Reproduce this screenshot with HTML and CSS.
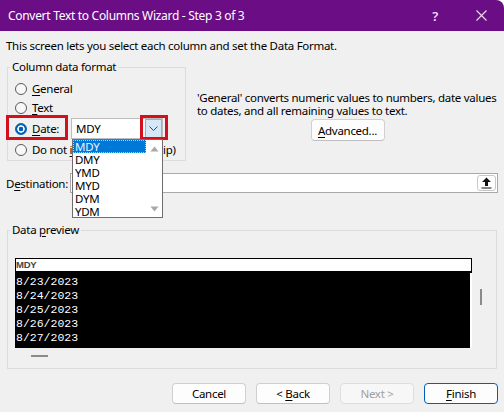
FILE: index.html
```html
<!DOCTYPE html>
<html>
<head>
<meta charset="utf-8">
<title>Convert Text to Columns Wizard - Step 3 of 3</title>
<link rel="stylesheet" href="styles.css">
</head>
<body>
<div class="dialog">
  <div class="titlebar">
    <span class="title">Convert Text to Columns Wizard - Step 3 of 3</span>
    <span class="tb-btn help">?</span>
    <span class="tb-btn close"><svg width="11" height="11" viewBox="0 0 11 11"><path d="M0.5 0.5L10.5 10.5M10.5 0.5L0.5 10.5" stroke="#f2dcf5" stroke-width="1.1" fill="none"/></svg></span>
  </div>
  <div class="content">
    <p class="intro">This screen lets you select each column and set the Data Format.</p>
    <div class="top-row">
      <fieldset class="group format">
        <legend>Column data format</legend>
        <div class="opt"><span class="radio"></span><span class="lbl"><u>G</u>eneral</span></div>
        <div class="opt"><span class="radio"></span><span class="lbl"><u>T</u>ext</span></div>
        <div class="opt date">
          <span class="radio on"></span><span class="lbl date-lbl"><u>D</u>ate:</span>
          <div class="combo">
            <span class="combo-val">MDY</span>
            <span class="combo-btn"><svg width="9" height="5" viewBox="0 0 9 5"><path d="M0.5 0.5L4.5 4.5L8.5 0.5" stroke="#3a4a5a" stroke-width="1" fill="none"/></svg></span>
            <span class="mark mark-btn"></span>
            <div class="dropdown">
              <ul class="dd-list">
                <li class="sel">MDY</li>
                <li>DMY</li>
                <li>YMD</li>
                <li>MYD</li>
                <li>DYM</li>
                <li>YDM</li>
              </ul>
              <div class="dd-scroll">
                <svg width="9" height="6" viewBox="0 0 9 6"><path d="M4.5 0.5L8.5 5.5H0.5Z" fill="#a8a8a8"/></svg>
                <svg width="9" height="6" viewBox="0 0 9 6"><path d="M0.5 0.5H8.5L4.5 5.5Z" fill="#a8a8a8"/></svg>
              </div>
            </div>
          </div>
          <span class="mark mark-date"></span>
        </div>
        <div class="opt"><span class="radio"></span><span class="lbl">Do not <u>i</u>mport column (skip)</span></div>
      </fieldset>
      <div class="info">
        <p class="info-text">'General' converts numeric values to numbers, date values<br>to dates, and all remaining values to text.</p>
        <button class="btn adv"><u>A</u>dvanced...</button>
      </div>
    </div>
    <div class="dest-row">
      <span class="dest-lbl">D<u>e</u>stination:</span>
      <div class="dest-input">
        <span class="collapse-btn"><svg width="11" height="12" viewBox="0 0 11 12"><path d="M5.5 0.5L10 5H7V9H4V5H1Z" fill="#111"/><path d="M0.5 11H10.5" stroke="#111" stroke-width="1.2"/></svg></span>
      </div>
    </div>
    <fieldset class="group preview">
      <legend>Data <u>p</u>review</legend>
      <div class="pv">
        <div class="pv-main">
          <div class="pv-head">MDY</div>
          <div class="pv-body">8/23/2023<br>8/24/2023<br>8/25/2023<br>8/26/2023<br>8/27/2023</div>
          <div class="pv-hscroll"><span class="thumb-h"></span></div>
        </div>
        <div class="pv-vscroll"><span class="thumb-v"></span></div>
      </div>
    </fieldset>
    <div class="buttons">
      <button class="btn">Cancel</button>
      <button class="btn">&lt; <u>B</u>ack</button>
      <button class="btn disabled">Next &gt;</button>
      <button class="btn default"><u>F</u>inish</button>
    </div>
  </div>
</div>
</body>
</html>
```

FILE: styles.css
```css
* { box-sizing: border-box; }
html, body { margin: 0; padding: 0; background: #fff; }
body {
  font-family: "Noto Sans", "Open Sans", sans-serif;
  font-size: 11.5px;
  letter-spacing: -0.28px;
  color: #000;
}
u { text-decoration: underline; text-underline-offset: 2px; }

.dialog {
  width: 504px;
  height: 412px;
  background: #f0f0f0;
  border-top-right-radius: 8px;
  overflow: hidden;
  display: flex;
  flex-direction: column;
}

.titlebar {
  height: 31px;
  flex: none;
  background: #6b0d84;
  color: #fff;
  display: flex;
  align-items: center;
  padding-left: 8px;
}
.title { flex: 1; font-size: 12px; letter-spacing: -0.3px; white-space: nowrap; }
.tb-btn {
  width: 46px;
  height: 31px;
  display: flex;
  align-items: center;
  justify-content: center;
  color: #f2dcf5;
}
.help { font-size: 13px; font-weight: 600; }

.content {
  flex: 1;
  padding: 0 6px;
  display: flex;
  flex-direction: column;
}
.intro { margin: 7px 0 0; line-height: 16px; white-space: nowrap; }

.top-row { display: flex; align-items: flex-start; margin-top: 6px; }

.group {
  margin: 0;
  min-width: 0;
  border: 1px solid #dcdcdc;
  padding: 0 0 0 7px;
}
.group legend {
  padding: 0 2px;
  margin-left: -5px;
  line-height: 14px;
}

.format {
  flex: none;
  margin-left: 1px;
  width: 179px;
  height: 101px;
  padding-top: 5px;
  padding-bottom: 2px;
}
.opt { display: flex; align-items: center; height: 19px; white-space: nowrap; }
.opt.date { height: 23px; position: relative; }
.radio {
  width: 12px;
  height: 12px;
  border-radius: 50%;
  border: 1px solid #5a5a5a;
  background: #f8f8f8;
  flex: none;
  margin-right: 5px;
}
.radio.on {
  border-color: #005fb8;
  background: radial-gradient(circle, #005fb8 0 2px, #fff 2.6px 3.4px, #005fb8 4px);
}
.date-lbl { width: 39px; }

.combo {
  position: relative;
  width: 92px;
  height: 21px;
  background: #fff;
  border: 1px solid #bdbdbd;
  display: flex;
  align-items: center;
  padding-left: 4px;
}
.combo-val { flex: 1; }
.combo-btn {
  width: 17px;
  height: 19px;
  background: #d6e8f8;
  border: 1px solid #7eb4ea;
  display: flex;
  align-items: center;
  justify-content: center;
}

.mark {
  position: absolute;
  border: 3px solid #d3101c;
  pointer-events: none;
}
.mark-date { left: -9px; top: -2px; width: 62px; height: 25px; }
.mark-btn { left: 68px; top: -4px; width: 28px; height: 25px; }

.dropdown {
  position: absolute;
  z-index: 5;
  left: 0;
  top: 20px;
  width: 91px;
  height: 79px;
  background: #fff;
  border: 1px solid #6e6e6e;
  display: flex;
}
.dd-list {
  list-style: none;
  margin: 0;
  padding: 0;
  width: 73px;
}
.dd-list li {
  height: 13px;
  line-height: 13px;
  padding-left: 2px;
}
.dd-list li.sel {
  background: #0078d7;
  color: #eaf4ff;
  outline: 1px dotted #9fd0ff;
  outline-offset: -1px;
}
.dd-scroll {
  flex: 1;
  display: flex;
  flex-direction: column;
  justify-content: space-between;
  align-items: center;
  padding: 6px 0 5px;
}

.info { margin-left: 11px; padding-top: 31px; display: flex; flex-direction: column; align-items: center; flex: 1; min-width: 0; }
.info-text { margin: 0; line-height: 13px; white-space: nowrap; align-self: flex-start; }

.btn {
  font-family: inherit;
  font-size: 11.5px;
  letter-spacing: -0.28px;
  color: #000;
  height: 22px;
  width: 74px;
  background: #fdfdfd;
  border: 1px solid #d0d0d0;
  border-bottom-color: #c0c0c0;
  border-radius: 4px;
  padding: 0;
}
.adv { margin-top: 2px; }

.dest-row { display: flex; align-items: center; margin-top: 12px; height: 20px; }
.dest-lbl { width: 64px; }
.dest-input {
  flex: 1;
  height: 20px;
  background: #fff;
  border: 1px solid #a9a9a9;
  display: flex;
  justify-content: flex-end;
  align-items: center;
  padding-right: 1px;
}
.collapse-btn {
  width: 19px;
  height: 16px;
  border: 1px solid #c8c8c8;
  border-radius: 3px;
  background: #fff;
  display: flex;
  align-items: center;
  justify-content: center;
}

.preview {
  margin: 30px 1px 0 1px;
  height: 146px;
  padding-top: 21px;
}
.pv { display: flex; }
.pv-main { width: 457px; }
.pv-head {
  height: 15px;
  background: #fff;
  border: 1px solid #000;
  border-bottom-width: 2px;
  font-family: "Liberation Sans", sans-serif;
  font-size: 9.5px;
  font-weight: bold;
  line-height: 12px;
  color: #444;
  letter-spacing: -0.2px;
}
.pv-body {
  height: 75px;
  background: #000;
  border-right: 2px solid #fff;
  color: #fff;
  font-family: "Liberation Mono", monospace;
  font-size: 11.5px;
  letter-spacing: 0;
  line-height: 14px;
  padding: 2px 0 0 1px;
}
.pv-hscroll { height: 14px; padding: 7px 0 0 16px; }
.thumb-h { display: block; width: 17px; height: 2px; background: #8a8a8a; }
.pv-vscroll { width: 18px; padding: 31px 0 0 8px; }
.thumb-v { display: block; width: 2px; height: 16px; background: #8a8a8a; }

.buttons {
  display: flex;
  justify-content: flex-end;
  gap: 10px;
  margin-top: 14px;
}
.buttons .btn { height: 21px; }
.btn.disabled { color: #a0a0a0; background: #f7f7f7; border-color: #dedede; }
.btn.default { border-color: #005fb8; }
```
